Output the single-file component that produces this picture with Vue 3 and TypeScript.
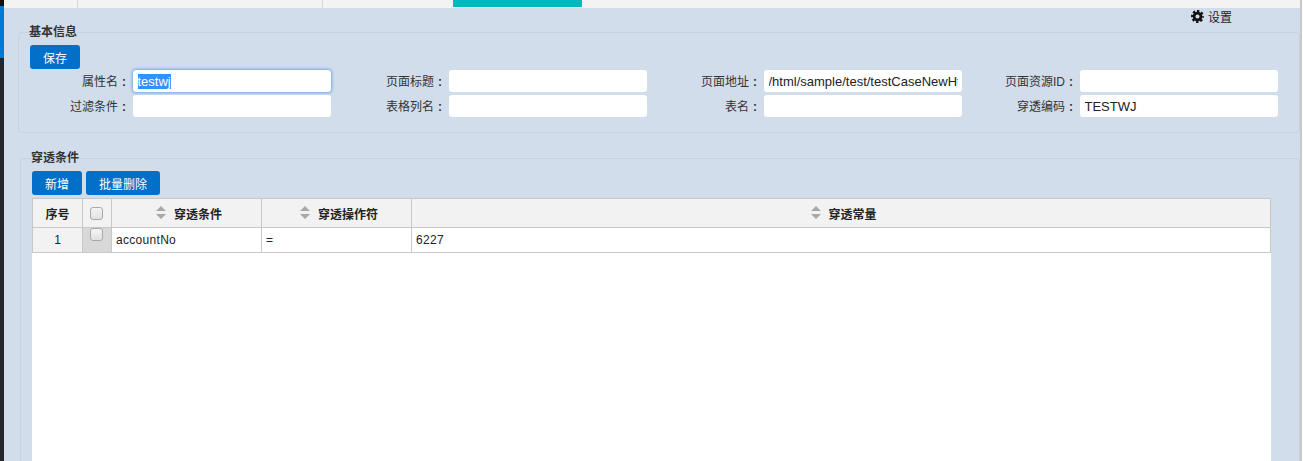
<script setup lang="ts">
import { onMounted, ref } from 'vue'

const firstInput = ref<HTMLInputElement | null>(null)

const fields = [
  { label: '属性名', value: 'testwj', focus: true },
  { label: '页面标题', value: '' },
  { label: '页面地址', value: '/html/sample/test/testCaseNewHtml' },
  { label: '页面资源ID', value: '' },
  { label: '过滤条件', value: '' },
  { label: '表格列名', value: '' },
  { label: '表名', value: '' },
  { label: '穿透编码', value: 'TESTWJ' },
]

const columns = ['穿透条件', '穿透操作符', '穿透常量']

onMounted(() => {
  firstInput.value?.focus()
  firstInput.value?.select()
})

function setRef(el: unknown, focus?: boolean) {
  if (focus) firstInput.value = el as HTMLInputElement
}
</script>

<template>
  <div class="page">
    <aside class="strip">
      <div class="strip-top"></div>
      <div class="strip-blue"></div>
      <div class="strip-dark"></div>
    </aside>
    <div class="main">
      <header class="tabs">
        <div class="tab t1"></div>
        <div class="tab t2"></div>
        <div class="tab t3"></div>
        <div class="tab-active"></div>
      </header>
      <div class="panel">
        <div class="settings">
          <svg class="gear" viewBox="0 0 12 12" width="13" height="13">
            <circle cx="6" cy="6" r="3.2" fill="none" stroke="#111" stroke-width="2.6" />
            <circle cx="6" cy="6" r="5" fill="none" stroke="#111" stroke-width="2" stroke-dasharray="2.2 1.73" stroke-dashoffset="1.1" />
          </svg>
          <span>设置</span>
        </div>
        <fieldset class="box box-info">
          <legend>基本信息</legend>
          <button class="btn save">保存</button>
          <div class="form">
            <template v-for="f in fields" :key="f.label">
              <label>{{ f.label }}<b class="colon">:</b></label>
              <input :ref="(el) => setRef(el, f.focus)" :class="{ focused: f.focus }" :value="f.value" />
            </template>
          </div>
        </fieldset>
        <fieldset class="box box-cond">
          <legend>穿透条件</legend>
          <div class="toolbar">
            <button class="btn">新增</button>
            <button class="btn">批量删除</button>
          </div>
          <div class="sheet">
            <div class="row head">
              <div class="cell c-no">序号</div>
              <div class="cell c-chk"><span class="chk"></span></div>
              <div v-for="(c, i) in columns" :key="c" class="cell" :class="i === 2 ? 'c-wide' : 'c-col'">
                <svg class="sort" viewBox="0 0 10 14" width="10" height="14">
                  <path d="M5 0 L10 5 H0 Z M0 8 H10 L5 13 Z" fill="#a8a8a8" />
                </svg>
                <span>{{ c }}</span>
              </div>
            </div>
            <div class="row body">
              <div class="cell c-no num">1</div>
              <div class="cell c-chk grey"><span class="chk"></span></div>
              <div class="cell c-col txt">accountNo</div>
              <div class="cell c-col txt">=</div>
              <div class="cell c-wide txt">6227</div>
            </div>
          </div>
        </fieldset>
      </div>
    </div>
  </div>
</template>

<style>
html, body { margin: 0; height: 100%; overflow: hidden; background: #fff; }
</style>

<style scoped>
.page {
  display: flex;
  width: 1303px;
  height: 461px;
  overflow: hidden;
  font-family: "Liberation Sans", "Noto Sans CJK SC", sans-serif;
  font-size: 12px;
  color: #333;
}
.strip { width: 4px; display: flex; flex-direction: column; flex: none; }
.strip-top { height: 6px; background: #111; }
.strip-blue { height: 52px; background: #0078d7; }
.strip-dark { flex: 1; background: #252629; }
.main {
  flex: 1;
  display: flex;
  flex-direction: column;
  min-width: 0;
  margin-right: 1px;
  border-right: 2px solid #c8c8c8;
}
.tabs { height: 8px; background: #f3f3f3; display: flex; flex: none; }
.tab { border-right: 1px solid #d8d8d8; height: 8px; box-sizing: border-box; }
.t1 { width: 74px; }
.t2 { width: 245px; }
.t3 { width: 130px; border-right: 0; }
.tab-active { width: 129px; height: 7px; background: #00b9bb; }
.panel {
  flex: 1;
  background: #d2ddeb;
}
.settings {
  height: 17px;
  padding: 0 68px 0 0;
  display: flex;
  justify-content: flex-end;
  align-items: center;
  gap: 4px;
  color: #222;
}
.box {
  border: 1px solid #c5d2e2;
  border-radius: 4px;
  padding: 0;
  min-width: 0;
  margin: 0;
}
.box legend {
  font-weight: bold;
  font-size: 12px;
  line-height: 14px;
  padding: 0;
  margin-left: -1px;
  color: #333;
}
.box-info {
  margin: 0 0 0 14px;
  height: 108px;
  padding: 6px 0 0 11px;
  box-sizing: border-box;
}
.btn {
  height: 24px;
  border: 0;
  border-radius: 3px;
  background: #026fc9;
  color: #fff;
  font: inherit;
  padding: 0 13px;
  display: block;
}
.save { width: 50px; padding: 0; }
.form {
  display: grid;
  grid-template-columns: 103px 198px 118px 198px 117px 198px 118px 198px;
  grid-auto-rows: 22px;
  row-gap: 3px;
  margin-top: 1px;
}
.form label {
  text-align: right;
  line-height: 24px;
  white-space: nowrap;
}
.colon {
  display: inline-block;
  width: 15px;
  padding-left: 4px;
  box-sizing: border-box;
  text-align: left;
}
.form input {
  box-sizing: border-box;
  width: 198px;
  height: 22px;
  border: 0;
  border-radius: 3px;
  background: #fff;
  padding: 1px 4.5px 0;
  font: 13px "Liberation Sans", sans-serif;
  color: #222;
  outline: 0;
}
.form input.focused {
  box-shadow: 0 0 3px 1px #6fa8e6;
}
.form input::selection { background: #3390ff; color: #fff; }
.box-cond {
  margin: 18px 0 0 16px;
  padding: 6px 0 0 11px;
  height: 320px;
  box-sizing: border-box;
}
.toolbar { display: flex; gap: 4px; }
.sheet {
  margin-top: 3px;
  width: 1239px;
  height: 300px;
  background: #fff;
}
.row { display: flex; box-sizing: border-box; border: 1px solid #c8c8c8; }
.row.head { height: 30px; background: #f2f2f2; font-weight: bold; }
.row.body { height: 25px; border-top: 0; background: #fff; }
.cell {
  box-sizing: border-box;
  border-right: 1px solid #c8c8c8;
  display: flex;
  align-items: center;
  justify-content: center;
  color: #222;
}
.cell:last-child { border-right: 0; }
.c-no { width: 50px; background: #f2f2f2; }
.c-chk { width: 29px; }
.c-col { width: 150px; padding-left: 5px; gap: 8px; }
.c-wide { flex: 1; padding-left: 6px; gap: 7px; }
.num { font-weight: normal; }
.txt { justify-content: flex-start; padding-left: 4px; letter-spacing: 0.3px; }
.grey { background: #d8d8d8; align-items: flex-start; }
.chk {
  width: 13px;
  height: 13px;
  margin-right: 1px;
  box-sizing: border-box;
  border: 1px solid #a9a9a9;
  border-radius: 3px;
  background: linear-gradient(#f4f4f4, #e2e2e2);
}
</style>
